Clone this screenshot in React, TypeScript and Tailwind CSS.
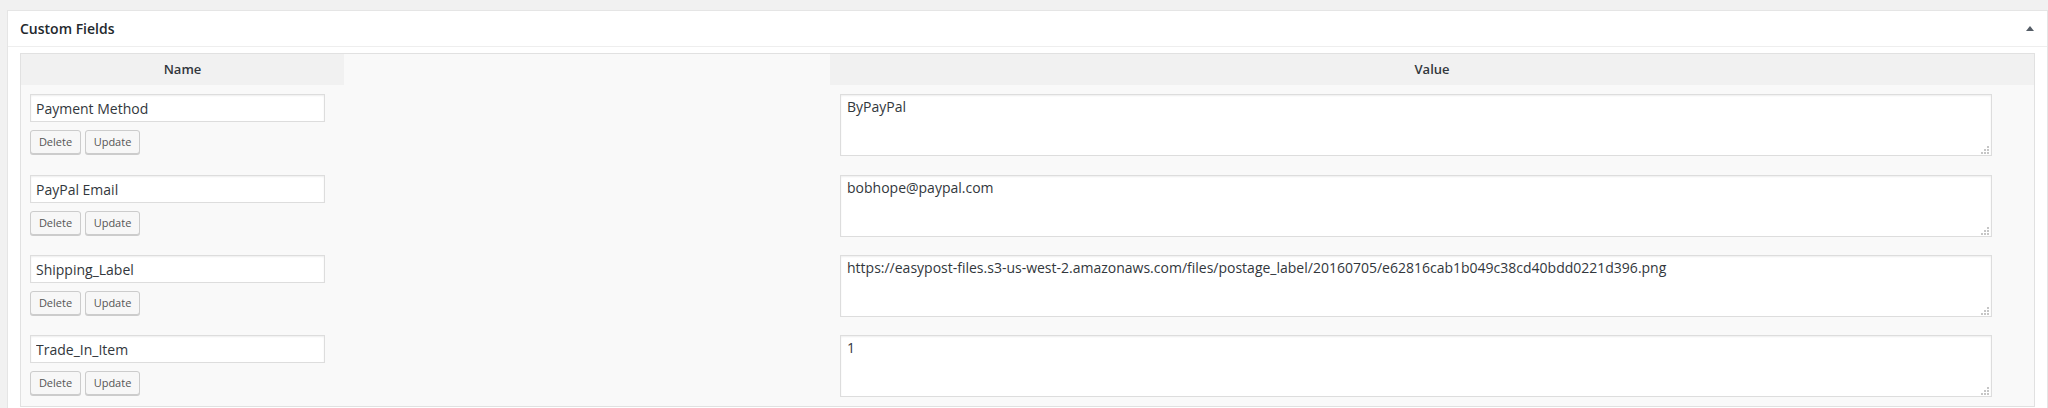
import React from 'react';

interface Field {
  name: string;
  value: string;
}

const fields: Field[] = [
  { name: 'Payment Method', value: 'ByPayPal' },
  { name: 'PayPal Email', value: 'bobhope@paypal.com' },
  { name: 'Shipping_Label', value: 'https://easypost-files.s3-us-west-2.amazonaws.com/files/postage_label/20160705/e62816cab1b049c38cd40bdd0221d396.png' },
  { name: 'Trade_In_Item', value: '1' },
];

const SmallButton = ({ label, width }: { label: string; width: string }) => (
  <button
    type="button"
    className={`${width} h-[24px] rounded-[3px] border border-[#cccccc] bg-[#f7f7f7] text-[11px] leading-[22px] text-[#555555] shadow-[0_1px_0_#cccccc]`}
  >
    {label}
  </button>
);

// dotted resize grip, old chrome style
const Grip = () => (
  <svg className="absolute right-[3px] bottom-[2px]" width="8" height="8" viewBox="0 0 8 8">
    <rect x="6" y="0" width="2" height="2" fill="#c6c6c6" />
    <rect x="3" y="3" width="2" height="2" fill="#c6c6c6" />
    <rect x="6" y="3" width="2" height="2" fill="#c6c6c6" />
    <rect x="0" y="6" width="2" height="2" fill="#c6c6c6" />
    <rect x="3" y="6" width="2" height="2" fill="#c6c6c6" />
    <rect x="6" y="6" width="2" height="2" fill="#c6c6c6" />
  </svg>
);

const App = () => {
  return (
    <div className="h-[408px] overflow-hidden bg-[#f1f1f1] pl-[7px] pt-[10px] font-['Open_Sans',sans-serif] text-[#32373c]">
      <div className="min-h-[420px] border border-[#e5e5e5] bg-white">
        <div className="flex h-[36px] items-center justify-between border-b border-[#eeeeee] pl-[12px] pr-[13px]">
          <h2 className="text-[14px] font-semibold text-[#23282d]">Custom Fields</h2>
          <svg width="8" height="5" viewBox="0 0 8 5" className="mb-[1px]">
            <polygon points="4,0 8,5 0,5" fill="#555d66" />
          </svg>
        </div>

        <div className="px-[12px] pt-[6px]">
          <div className="border border-[#e1e1e1] bg-[#f9f9f9]">
            <div className="grid grid-cols-[323px_486px_1fr]">
              <div className="flex h-[31px] items-center justify-center bg-[#f1f1f1] text-[13px] font-semibold">Name</div>
              <div />
              <div className="flex h-[31px] items-center justify-center bg-[#f1f1f1] text-[13px] font-semibold">Value</div>
            </div>

            {fields.map((field, index) => (
              <div
                key={index}
                className={`grid grid-cols-[323px_486px_1fr] pt-[9px] ${index === 0 ? 'h-[81px]' : 'h-[80px]'}`}
              >
                <div className="pl-[9px]">
                  <input
                    readOnly
                    value={field.name}
                    className="h-[28px] w-[295px] border border-[#dddddd] bg-white px-[5px] text-[14px] text-[#32373c] shadow-[inset_0_1px_2px_rgba(0,0,0,0.07)] outline-none"
                  />
                  <div className="mt-[8px] flex gap-[4px]">
                    <SmallButton label="Delete" width="w-[51px]" />
                    <SmallButton label="Update" width="w-[55px]" />
                  </div>
                </div>
                <div />
                <div className="pl-[10px]">
                  <div className="relative h-[62px] w-[1152px]">
                    <textarea
                      readOnly
                      value={field.value}
                      className="block h-[62px] w-[1152px] resize-none overflow-hidden border border-[#dddddd] bg-white px-[6px] pt-[2px] text-[14px] leading-[20px] text-[#32373c] shadow-[inset_0_1px_2px_rgba(0,0,0,0.07)] outline-none"
                    />
                    <Grip />
                  </div>
                </div>
              </div>
            ))}
          </div>
        </div>
      </div>
    </div>
  );
};

export default App;
